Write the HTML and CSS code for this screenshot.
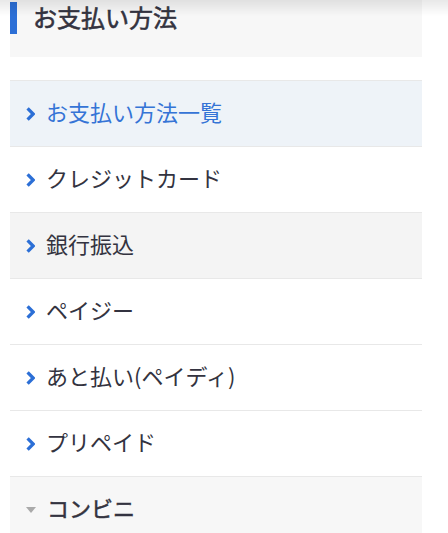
FILE: index.html
```html
<!DOCTYPE html>
<html lang="ja">
<head>
  <meta charset="UTF-8" />
  <meta name="viewport" content="width=device-width, initial-scale=1.0"/>
  <title>お支払い方法</title>
  <link rel="stylesheet" href="styles.css">
</head>
<body>

  <div class="side">
    <h2 class="side-title"><span>お支払い方法</span></h2>

    <ul class="side-menu">
      <li class="is-current">
        <a href="#"><svg class="chev" viewBox="0 0 9 14"><path d="M1.6 1.4 L7.2 7 L1.6 12.6" /></svg>お支払い方法一覧</a>
      </li>
      <li>
        <a href="#"><svg class="chev" viewBox="0 0 9 14"><path d="M1.6 1.4 L7.2 7 L1.6 12.6" /></svg>クレジットカード</a>
      </li>
      <li class="is-hover">
        <a href="#"><svg class="chev" viewBox="0 0 9 14"><path d="M1.6 1.4 L7.2 7 L1.6 12.6" /></svg>銀行振込</a>
      </li>
      <li>
        <a href="#"><svg class="chev" viewBox="0 0 9 14"><path d="M1.6 1.4 L7.2 7 L1.6 12.6" /></svg>ペイジー</a>
      </li>
      <li>
        <a href="#"><svg class="chev" viewBox="0 0 9 14"><path d="M1.6 1.4 L7.2 7 L1.6 12.6" /></svg>あと払い(ペイディ)</a>
      </li>
      <li>
        <a href="#"><svg class="chev" viewBox="0 0 9 14"><path d="M1.6 1.4 L7.2 7 L1.6 12.6" /></svg>プリペイド</a>
      </li>
      <li class="is-open">
        <a href="#"><span class="tri"></span>コンビニ</a>
      </li>
    </ul>
  </div>

  <div class="top-shadow"></div>

</body>
</html>
```

FILE: styles.css
```css
* {
  box-sizing: border-box;
}

body {
  margin: 0;
  font-family: "Noto Sans CJK JP", "Noto Sans", sans-serif;
  color: #333340;
  background: #fff;
}

.side {
  width: 412px;
  margin-left: 10px;
}

.side-title {
  margin: 0;
  padding: 4px 0 23px;
  background: #f7f7f7;
  font-size: 24px;
  font-weight: 400;
  -webkit-text-stroke: 0.6px #333340;
}

.side-title span {
  display: block;
  border-left: 7px solid #2c6fd6;
  padding-left: 16px;
  line-height: 30px;
  padding-bottom: 2px;
  margin-top: -2px;
  height: 32px;
}

.side-menu {
  list-style: none;
  margin: 23px 0 0;
  padding: 0;
}

.side-menu li {
  border-top: 1px solid #e8e8e8;
  background: #fff;
}

.side-menu a {
  display: flex;
  align-items: center;
  height: 65px;
  padding: 0 0 5px 16px;
  font-size: 22px;
  color: #333340;
  text-decoration: none;
}

.chev {
  width: 9px;
  height: 14px;
  margin: 5px 11px 0 0;
  flex-shrink: 0;
}

.chev path {
  fill: none;
  stroke: #2c6fd6;
  stroke-width: 3.3;
}

.side-menu .is-current {
  background: #eef3f8;
}

.side-menu .is-current a {
  color: #3574d6;
}

.side-menu .is-hover {
  background: #f4f4f4;
}

.side-menu .is-open {
  background: #f7f7f7;
}

.side-menu .is-open a {
  -webkit-text-stroke: 0.5px #333340;
}

.tri {
  width: 0;
  height: 0;
  border-left: 5px solid transparent;
  border-right: 5px solid transparent;
  border-top: 6px solid #aaa;
  margin: 5px 11px 0 0;
}

.top-shadow {
  position: fixed;
  top: 0;
  left: 0;
  right: 0;
  height: 16px;
  background: linear-gradient(to bottom, rgba(0, 0, 0, 0.09), rgba(0, 0, 0, 0));
  pointer-events: none;
}
```
